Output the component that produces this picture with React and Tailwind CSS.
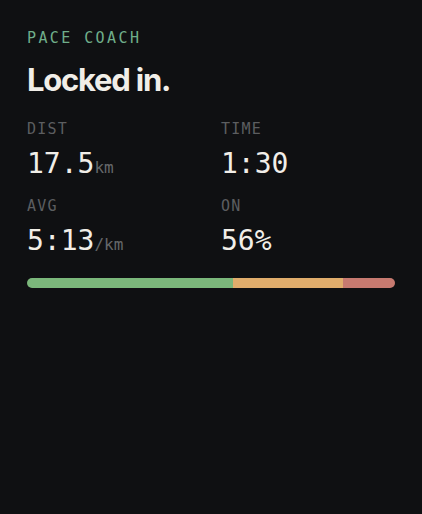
const stats = [
  { label: "DIST", value: "17.5", unit: "km" },
  { label: "TIME", value: "1:30" },
  { label: "AVG", value: "5:13", unit: "/km" },
  { label: "ON", value: "56%" },
];

const zones = [
  { pct: 56, color: "bg-[#7bb77b]" },
  { pct: 30, color: "bg-[#e0ad6c]" },
  { pct: 14, color: "bg-[#c77a70]" },
];

export default function App() {
  return (
    <div className="min-h-screen w-full bg-[#0f1012] px-[27px] pt-[28px] font-['DejaVu_Sans_Mono',monospace]">
      <p className="text-[15px] leading-5 tracking-[0.16em] text-[#6fae8a]">PACE COACH</p>
      <h1 className="mt-[12px] font-['Inter',sans-serif] text-[31px] font-bold leading-10 tracking-[-0.04em] text-[#f1eee8]">
        Locked in.
      </h1>
      <div className="mt-[19px] grid grid-cols-2 gap-x-5 gap-y-[10px]">
        {stats.map((s) => (
          <div key={s.label}>
            <p className="text-[15px] leading-5 tracking-[0.08em] text-[#5c5e60]">{s.label}</p>
            <p className="mt-[7px] text-[28px] leading-9 text-[#f1eee8]">
              {s.value}
              {s.unit && <span className="text-[16px] text-[#66686a]">{s.unit}</span>}
            </p>
          </div>
        ))}
      </div>
      <div className="mt-[15px] flex h-[10px] w-full overflow-hidden rounded-full">
        {zones.map((z, i) => (
          <div key={i} className={z.color} style={{ width: `${z.pct}%` }} />
        ))}
      </div>
    </div>
  );
}
